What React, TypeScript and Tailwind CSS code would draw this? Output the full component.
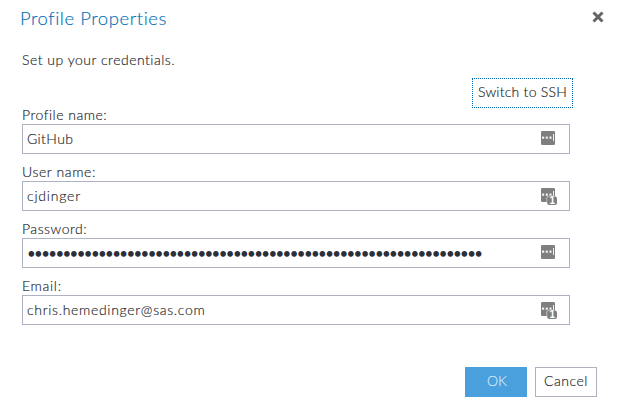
import React from "react";

function FillIcon({ count }: { count?: number }) {
  return (
    <svg width="16" height="18" viewBox="0 0 16 18" className="shrink-0 [-webkit-text-stroke:0]">
      <rect x="0" y="0" width="14" height="14" rx="1.2" fill="#7f7f7f" />
      <rect x="1" y="5.5" width="2.2" height="2.2" rx="0.5" fill="#f0f0f0" />
      <rect x="4.7" y="5.5" width="2.2" height="2.2" rx="0.5" fill="#f0f0f0" />
      <rect x="8.4" y="5.5" width="2.2" height="2.2" rx="0.5" fill="#f0f0f0" />
      <rect x="12" y="3" width="1" height="7" fill="#f0f0f0" />
      {count !== undefined && (
        <>
          <path d="M5.4 14.2V10.2Q5.4 8 7.6 8H14V14.2Z" fill="#c9c9c9" />
          <rect x="6.2" y="8.4" width="9.8" height="8.6" rx="2" fill="#7f7f7f" />
          <text x="8.4" y="16.2" fontSize="10" fontWeight="700" fill="#fff" stroke="none" fontFamily="Liberation Sans, sans-serif">
            {count}
          </text>
        </>
      )}
    </svg>
  );
}

type FieldProps = { label: string; labelClass: string; value: string; valueClass: string; count?: number };

function Field({ label, labelClass, value, valueClass, count }: FieldProps) {
  return (
    <div className="flex h-[57px] flex-col">
      <label className={`h-[18px] self-start whitespace-nowrap leading-[18px] ${labelClass}`}>{label}</label>
      <div className="flex h-[30px] items-start justify-between border border-[#afb2c1] bg-white pr-3 pl-1">
        <span className={`whitespace-nowrap leading-[28px] ${valueClass}`}>{value}</span>
        <span className="mt-1.5">
          <FillIcon count={count} />
        </span>
      </div>
    </div>
  );
}

export default function App() {
  return (
    <main className="flex h-[411px] w-[618px] flex-col bg-white font-['Lato',sans-serif] text-[14px] font-light text-[#202226] [-webkit-text-stroke:0.15px_currentColor]">
      <header className="flex h-[42px] items-start justify-between pt-[6px] pr-[14px] pl-[20px]">
        <h1 className="text-[18.5px] leading-[24px] tracking-[0.55px] text-[#0070b8]">Profile Properties</h1>
        <button aria-label="Close" className="mt-[5px]">
          <svg width="12" height="12" viewBox="0 0 12 12" className="block">
            <path d="M1.5 1.5L10.5 10.5M10.5 1.5L1.5 10.5" stroke="#666" strokeWidth="3" />
          </svg>
        </button>
      </header>
      <p className="h-[36px] pl-[22px] leading-[36px] tracking-[0.5px]">Set up your credentials.</p>
      <div className="flex h-[28px] justify-end pr-[45px]">
        <button className="h-[30px] w-[101px] border border-dotted border-[#0067b0] pb-[3px] tracking-[0.25px] whitespace-nowrap text-[#181b22]">
          Switch to SSH
        </button>
      </div>
      <section className="flex w-[570px] flex-col pl-[22px]">
        <Field label="Profile name:" labelClass="tracking-[0.5px]" value="GitHub" valueClass="tracking-[0.4px] text-[#1b1e27]" />
        <Field label="User name:" labelClass="tracking-[0.6px]" value="cjdinger" valueClass="tracking-[0.8px] text-[#1b1e27]" count={1} />
        <Field
          label="Password:"
          labelClass="tracking-[0.5px]"
          value={"•".repeat(64)}
          valueClass="font-normal text-[15px] tracking-[-1.6px] text-[#2b2f3a] [-webkit-text-stroke:0]"
        />
        <Field label="Email:" labelClass="tracking-[0.7px]" value="chris.hemedinger@sas.com" valueClass="tracking-[0.68px] text-[#1b1e27]" count={1} />
      </section>
      <footer className="mt-[33px] flex justify-end gap-2 pr-[21px]">
        <button className="h-[30px] w-[62px] bg-[#4a9fdd] pb-[3px] pl-0.5 text-[#d8edfb]">OK</button>
        <button className="h-[30px] w-[62px] border border-[#afb2c1] pb-[3px] tracking-[0.5px] text-[#181b22]">Cancel</button>
      </footer>
    </main>
  );
}
